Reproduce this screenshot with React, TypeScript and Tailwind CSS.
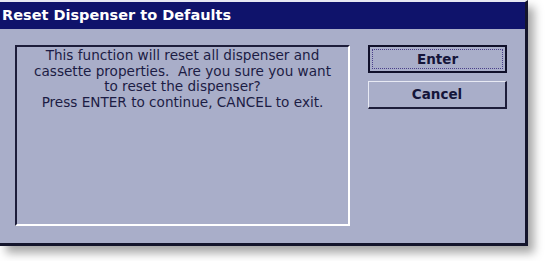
export default function App() {
  return (
    <div className="w-[545px] h-[261px] bg-white" style={{ fontFamily: '"DejaVu Sans", Verdana, sans-serif' }}>
      <div className="w-[528px] h-[246px] flex flex-col bg-[#a9aec9] border-t-2 border-t-[#e6e8f2] border-r-[3px] border-r-[#14152c] border-b-[3px] border-b-[#14152c] shadow-[6px_7px_9px_rgba(0,0,0,0.35)]">
        <div className="h-[27px] bg-[#0f136b] text-white font-bold text-[14.5px] leading-[27px] pl-[2px]">
          Reset Dispenser to Defaults
        </div>
        <div className="flex gap-[18px] pl-[15px] pt-[16px]">
          <div className="w-[335px] h-[181px] border-t-2 border-l-2 border-t-[#1d1d3a] border-l-[#1d1d3a] border-r-2 border-b-2 border-r-white border-b-white pt-[1px] text-center text-[13.6px] leading-[15.6px] text-[#1c1c44]">
            <p>This function will reset all dispenser and</p>
            <p>cassette properties.&nbsp; Are you sure you want</p>
            <p>to reset the dispenser?</p>
            <p>Press ENTER to continue, CANCEL to exit.</p>
          </div>
          <div className="flex flex-col gap-[8px]">
            <button className="w-[139px] h-[28px] border-2 border-[#10102a] p-[2px] text-[13.5px] font-bold text-[#15153a]">
              <span className="flex h-full w-full items-center justify-center border border-dotted border-[#4a3f8a]">
                Enter
              </span>
            </button>
            <button className="w-[139px] h-[28px] border-t border-l border-t-[#e8eaf4] border-l-[#e8eaf4] border-r-2 border-b-2 border-r-[#1d1d3a] border-b-[#1d1d3a] text-[13.5px] font-bold text-[#15153a] flex items-center justify-center">
              Cancel
            </button>
          </div>
        </div>
      </div>
    </div>
  );
}
